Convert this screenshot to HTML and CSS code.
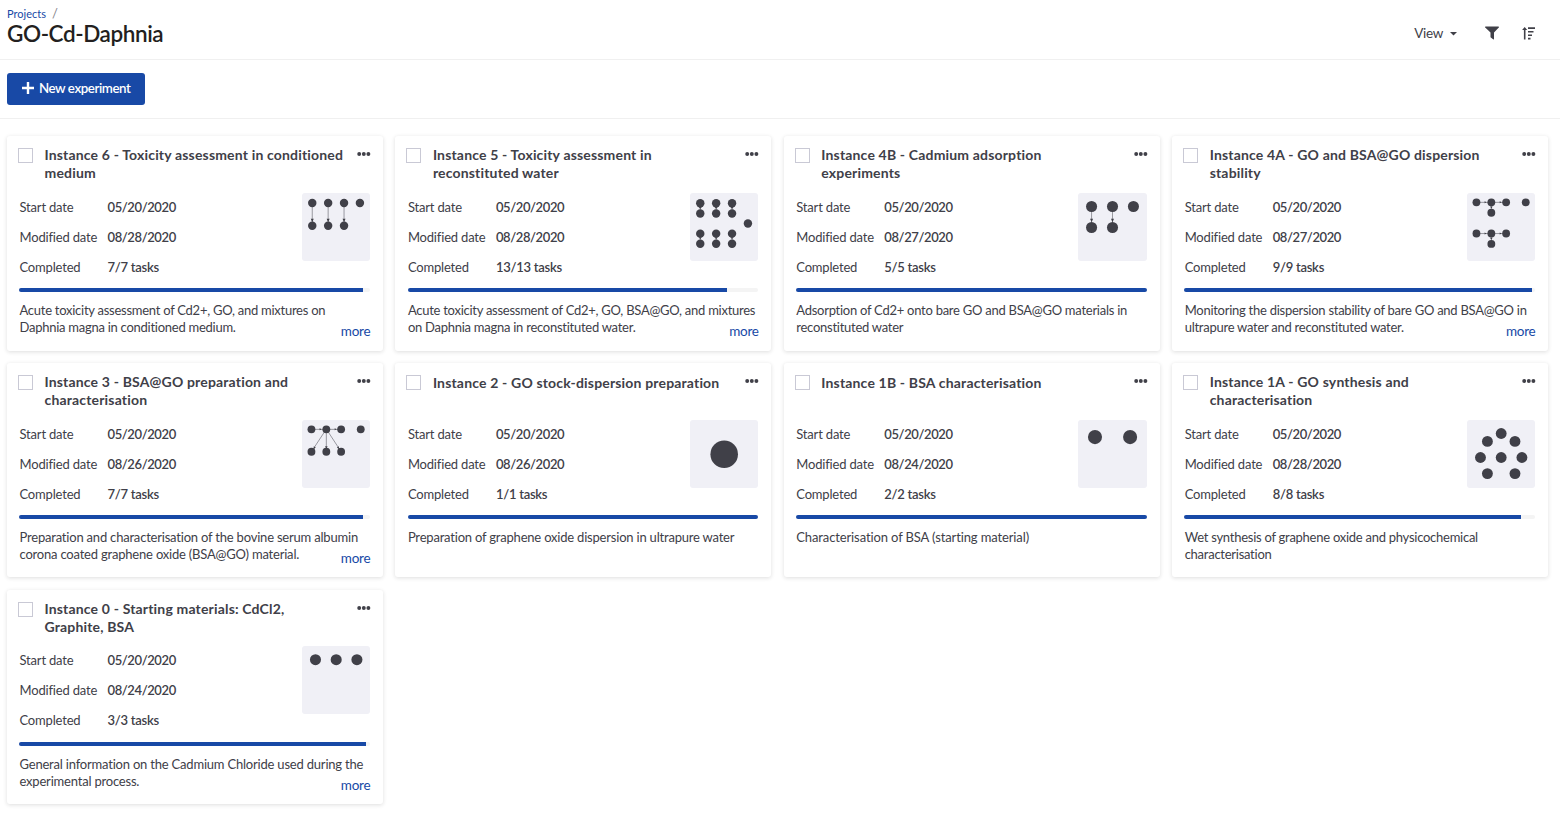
FILE: index.html
```html
<!DOCTYPE html>
<html lang="en">
<head>
<meta charset="utf-8">
<title>GO-Cd-Daphnia</title>
<link rel="stylesheet" href="styles.css">
</head>
<body>
<svg class="defs" width="0" height="0">
  <symbol id="dots" viewBox="0 0 14 6"><circle cx="2.2" cy="3" r="1.95"/><circle cx="6.8" cy="3" r="1.95"/><circle cx="11.4" cy="3" r="1.95"/></symbol>
</svg>
<header class="header">
  <div class="heading">
    <nav class="crumbs"><a>Projects</a><span class="slash">/</span></nav>
    <h1>GO-Cd-Daphnia</h1>
  </div>
  <div class="tools">
    <span class="view">View</span>
    <svg class="caret" width="7" height="4" viewBox="0 0 7 4"><path d="M0 0h7L3.5 3.6z"/></svg>
    <svg class="filter" width="14" height="14" viewBox="0 0 14 14"><path d="M.6.5h12.8c.6 0 .8.7.4 1.1L9 6.4v6.5c0 .5-.5.7-.9.4l-2.300-1.700a.7.7 0 0 1-.3-.6V6.400L.2 1.600C-.2 1.200 0 .5.600.500z"/></svg>
    <svg class="sort" width="13" height="13" viewBox="0 0 13 13"><path d="M2.700 0 5.200 3H3.500v9.500H1.900V3H.1zM6 .3h7V2H6zM6 3.900h5.500v1.600H6zM6 7.400h4v1.600H6zM6 10.800h2.500v1.600H6z"/></svg>
  </div>
</header>
<div class="actions">
  <button class="new"><svg width="12" height="12" viewBox="0 0 12 12"><path d="M4.800 0h2.400v4.800H12v2.400H7.200V12H4.800V7.200H0V4.800h4.800z"/></svg><span>New experiment</span></button>
</div>
<main class="grid">
  <article class="card">
    <div class="top"><span class="check"></span><h2>Instance 6 - Toxicity assessment in conditioned<br>medium</h2><svg class="dots"><use href="#dots"/></svg></div>
    <div class="info">
      <dl><dt>Start date</dt><dd>05/20/2020</dd><dt>Modified date</dt><dd>08/28/2020</dd><dt>Completed</dt><dd>7/7 tasks</dd></dl>
      <svg class="map" viewBox="0 0 68 68"><path d="M10.200 10v22M26 10v22M41.800 10v22"/><path class="tip" d="M8.700 25.500h3L10.200 29zM24.500 25.500h3L26 29zM40.300 25.500h3L41.800 29z"/><g><circle cx="10.200" cy="10" r="4.200"/><circle cx="26" cy="10" r="4.200"/><circle cx="41.800" cy="10" r="4.200"/><circle cx="57.600" cy="10" r="4.200"/><circle cx="10.200" cy="32.500" r="4.200"/><circle cx="26" cy="32.500" r="4.200"/><circle cx="41.800" cy="32.500" r="4.200"/></g></svg>
    </div>
    <div class="bar"><i style="width:98%"></i></div>
    <div class="foot"><p>Acute toxicity assessment of Cd2+, GO, and mixtures on<br>Daphnia magna in conditioned medium.</p><a>more</a></div>
  </article>
  <article class="card">
    <div class="top"><span class="check"></span><h2>Instance 5 - Toxicity assessment in<br>reconstituted water</h2><svg class="dots"><use href="#dots"/></svg></div>
    <div class="info">
      <dl><dt>Start date</dt><dd>05/20/2020</dd><dt>Modified date</dt><dd>08/28/2020</dd><dt>Completed</dt><dd>13/13 tasks</dd></dl>
      <svg class="map" viewBox="0 0 68 68"><path d="M10.200 10v10M26 10v10M41.800 10v10M10.200 40v10M26 40v10M41.800 40v10"/><path class="tip" d="M8.700 14h3l-1.500 2zM24.500 14h3l-1.500 2zM40.300 14h3l-1.500 2zM8.700 44h3l-1.500 2zM24.500 44h3l-1.500 2zM40.300 44h3l-1.500 2z"/><g><circle cx="10.200" cy="10.200" r="4.200"/><circle cx="26" cy="10.200" r="4.200"/><circle cx="41.800" cy="10.200" r="4.200"/><circle cx="10.200" cy="20.300" r="4.200"/><circle cx="26" cy="20.300" r="4.200"/><circle cx="41.800" cy="20.300" r="4.200"/><circle cx="10.200" cy="40.400" r="4.200"/><circle cx="26" cy="40.400" r="4.200"/><circle cx="41.800" cy="40.400" r="4.200"/><circle cx="10.200" cy="50.500" r="4.200"/><circle cx="26" cy="50.500" r="4.200"/><circle cx="41.800" cy="50.500" r="4.200"/><circle cx="57.600" cy="30.300" r="4.200"/></g></svg>
    </div>
    <div class="bar"><i style="width:91%"></i></div>
    <div class="foot"><p>Acute toxicity assessment of Cd2+, GO, BSA@GO, and mixtures<br>on Daphnia magna in reconstituted water.</p><a>more</a></div>
  </article>
  <article class="card">
    <div class="top"><span class="check"></span><h2>Instance 4B - Cadmium adsorption<br>experiments</h2><svg class="dots"><use href="#dots"/></svg></div>
    <div class="info">
      <dl><dt>Start date</dt><dd>05/20/2020</dd><dt>Modified date</dt><dd>08/27/2020</dd><dt>Completed</dt><dd>5/5 tasks</dd></dl>
      <svg class="map" viewBox="0 0 68 68"><path d="M13.500 13v21M34.300 13v21"/><path class="tip" d="M12 25.500h3l-1.500 3.500zM32.800 25.500h3l-1.500 3.500z"/><g><circle cx="13.500" cy="13.400" r="5.500"/><circle cx="34.300" cy="13.400" r="5.500"/><circle cx="55.100" cy="13.400" r="5.500"/><circle cx="13.500" cy="34.300" r="5.500"/><circle cx="34.300" cy="34.300" r="5.500"/></g></svg>
    </div>
    <div class="bar"><i style="width:100%"></i></div>
    <div class="foot"><p>Adsorption of Cd2+ onto bare GO and BSA@GO materials in<br>reconstituted water</p></div>
  </article>
  <article class="card">
    <div class="top"><span class="check"></span><h2>Instance 4A - GO and BSA@GO dispersion<br>stability</h2><svg class="dots"><use href="#dots"/></svg></div>
    <div class="info">
      <dl><dt>Start date</dt><dd>05/20/2020</dd><dt>Modified date</dt><dd>08/27/2020</dd><dt>Completed</dt><dd>9/9 tasks</dd></dl>
      <svg class="map" viewBox="0 0 68 68"><path d="M9 9.300h30M24.200 9v10M9 40.300h30M24.200 40v10"/><path class="tip" d="M17.500 8.300v2l2-1zM32.500 8.300v2l2-1zM22.900 13.500h2.600l-1.300 2zM17.500 39.300v2l2-1zM32.500 39.300v2l2-1zM22.900 44.500h2.600l-1.300 2z"/><g><circle cx="9.400" cy="9.300" r="3.900"/><circle cx="24.200" cy="9.300" r="3.900"/><circle cx="38.900" cy="9.300" r="3.900"/><circle cx="58.400" cy="9.300" r="3.900"/><circle cx="24.200" cy="19.600" r="3.900"/><circle cx="9.400" cy="40.300" r="3.900"/><circle cx="24.200" cy="40.300" r="3.900"/><circle cx="38.900" cy="40.300" r="3.900"/><circle cx="24.200" cy="50.600" r="3.900"/></g></svg>
    </div>
    <div class="bar"><i style="width:99%"></i></div>
    <div class="foot"><p>Monitoring the dispersion stability of bare GO and BSA@GO in<br>ultrapure water and reconstituted water.</p><a>more</a></div>
  </article>
  <article class="card">
    <div class="top"><span class="check"></span><h2>Instance 3 - BSA@GO preparation and<br>characterisation</h2><svg class="dots"><use href="#dots"/></svg></div>
    <div class="info">
      <dl><dt>Start date</dt><dd>05/20/2020</dd><dt>Modified date</dt><dd>08/26/2020</dd><dt>Completed</dt><dd>7/7 tasks</dd></dl>
      <svg class="map" viewBox="0 0 68 68"><path d="M9 9.300h30M24.200 9v22M24.200 9 9.400 31.500M24.200 9l14.700 22.500"/><path class="tip" d="M17.500 8.300v2l2-1zM32.500 8.300v2l2-1zM22.900 26h2.600l-1.300 2.500zM11.700 26l2 1.300-2 1.700zM36.700 26l-2 1.300 2 1.700z"/><g><circle cx="9.400" cy="9.300" r="3.900"/><circle cx="24.200" cy="9.300" r="3.900"/><circle cx="38.900" cy="9.300" r="3.900"/><circle cx="58.400" cy="9.300" r="3.900"/><circle cx="9.400" cy="31.600" r="3.900"/><circle cx="24.200" cy="31.600" r="3.900"/><circle cx="38.900" cy="31.600" r="3.900"/></g></svg>
    </div>
    <div class="bar"><i style="width:98%"></i></div>
    <div class="foot"><p class="loose">Preparation and characterisation of the bovine serum albumin<br>corona coated graphene oxide (BSA@GO) material.</p><a>more</a></div>
  </article>
  <article class="card">
    <div class="top"><span class="check"></span><h2 class="single">Instance 2 - GO stock-dispersion preparation</h2><svg class="dots"><use href="#dots"/></svg></div>
    <div class="info">
      <dl><dt>Start date</dt><dd>05/20/2020</dd><dt>Modified date</dt><dd>08/26/2020</dd><dt>Completed</dt><dd>1/1 tasks</dd></dl>
      <svg class="map" viewBox="0 0 68 68"><g><circle cx="34" cy="34" r="13.700"/></g></svg>
    </div>
    <div class="bar"><i style="width:100%"></i></div>
    <div class="foot"><p class="loose">Preparation of graphene oxide dispersion in ultrapure water</p></div>
  </article>
  <article class="card">
    <div class="top"><span class="check"></span><h2 class="single">Instance 1B - BSA characterisation</h2><svg class="dots"><use href="#dots"/></svg></div>
    <div class="info">
      <dl><dt>Start date</dt><dd>05/20/2020</dd><dt>Modified date</dt><dd>08/24/2020</dd><dt>Completed</dt><dd>2/2 tasks</dd></dl>
      <svg class="map" viewBox="0 0 68 68"><g><circle cx="16.900" cy="17" r="7"/><circle cx="51.800" cy="17" r="7"/></g></svg>
    </div>
    <div class="bar"><i style="width:100%"></i></div>
    <div class="foot"><p class="looser">Characterisation of BSA (starting material)</p></div>
  </article>
  <article class="card">
    <div class="top"><span class="check"></span><h2>Instance 1A - GO synthesis and<br>characterisation</h2><svg class="dots"><use href="#dots"/></svg></div>
    <div class="info">
      <dl><dt>Start date</dt><dd>05/20/2020</dd><dt>Modified date</dt><dd>08/28/2020</dd><dt>Completed</dt><dd>8/8 tasks</dd></dl>
      <svg class="map" viewBox="0 0 68 68"><g><circle cx="34" cy="13.400" r="5.400"/><circle cx="20.300" cy="21.300" r="5.400"/><circle cx="47.700" cy="21.300" r="5.400"/><circle cx="13.400" cy="37.300" r="5.400"/><circle cx="34" cy="37.300" r="5.400"/><circle cx="54.600" cy="37.300" r="5.400"/><circle cx="20.300" cy="53.300" r="5.400"/><circle cx="47.700" cy="53.300" r="5.400"/></g></svg>
    </div>
    <div class="bar"><i style="width:96%"></i></div>
    <div class="foot"><p>Wet synthesis of graphene oxide and physicochemical<br>characterisation</p></div>
  </article>
  <article class="card last">
    <div class="top"><span class="check"></span><h2>Instance 0 - Starting materials: CdCl2,<br>Graphite, BSA</h2><svg class="dots"><use href="#dots"/></svg></div>
    <div class="info">
      <dl><dt>Start date</dt><dd>05/20/2020</dd><dt>Modified date</dt><dd>08/24/2020</dd><dt>Completed</dt><dd>3/3 tasks</dd></dl>
      <svg class="map" viewBox="0 0 68 68"><g><circle cx="13.400" cy="13.600" r="5.500"/><circle cx="34" cy="13.600" r="5.500"/><circle cx="54.600" cy="13.600" r="5.500"/></g></svg>
    </div>
    <div class="bar"><i style="width:99%"></i></div>
    <div class="foot"><p class="loose">General information on the Cadmium Chloride used during the<br>experimental process.</p><a>more</a></div>
  </article>
</main>
</body>
</html>
```
FILE: styles.css
```css
* { box-sizing: border-box; }
body { margin: 0; background: #fff; color: #404048; font-family: Lato, sans-serif; font-size: 13px; height: 816px; overflow: hidden; }
.defs { display: block; }
h1, h2, p, dl, dd { margin: 0; }
a { color: #1849a6; }
.header { height: 60px; border-bottom: 1px solid #f0f0f0; display: flex; justify-content: space-between; padding: 6px 25px 0 7px; }
.crumbs { font-size: 11px; line-height: 16px; display: flex; gap: 6px; }
.slash { color: #85858c; font-size: 13px; line-height: 14px; }
h1 { font-size: 22.500px; line-height: 24px; font-weight: 600; letter-spacing: -.42px; color: #231f20; white-space: nowrap; }
.tools { display: flex; align-items: center; height: 54px; }
.view { font-size: 13.500px; letter-spacing: -.3px; }
.tools svg, .dots { fill: #404048; flex: none; }
.caret { margin: 2px 28px 0 7px; }
.filter { margin-right: 23px; }
.actions { height: 59px; border-bottom: 1px solid #f0f0f0; padding: 13px 7px; }
.new { display: flex; align-items: center; gap: 5px; width: 138px; height: 32px; padding: 0 0 2px 15px; border: 0; border-radius: 3px; background: #1849a6; color: #fff; font: 600 13.300px Lato, sans-serif; letter-spacing: -.43px; white-space: nowrap; }
.new svg { fill: #fff; }
.grid { display: grid; grid-template-columns: repeat(4, 376px); grid-auto-rows: 214.600px; gap: 12.250px 12.400px; padding: 17px 0 0 7px; }
.card { background: #fff; border-radius: 3px; box-shadow: 0 1px 4px rgba(35, 31, 32, .15); padding: 10px 13px 0 12.500px; display: flex; flex-direction: column; min-width: 0; }
.top { display: flex; height: 46px; flex: none; }
.check { width: 15px; height: 15px; border: 1px solid #c9c9d5; margin: 2px 11.500px 0 -1.500px; flex: none; }
h2 { flex: 1; font-size: 14px; line-height: 18px; font-weight: 700; letter-spacing: .17px; white-space: nowrap; }
.single { padding-top: 1px; }
.dots { width: 14px; height: 6px; margin: 5px -1px 0 0; }
.info { display: flex; justify-content: space-between; height: 96px; flex: none; }
.last .info { height: 97px; margin-top: -1px; }
dl { display: grid; grid-template-columns: 88px auto; grid-auto-rows: 30px; line-height: 30px; font-size: 13px; letter-spacing: -.18px; white-space: nowrap; }
dd { font-weight: 600; letter-spacing: -.4px; }
dd:last-child { letter-spacing: -.26px; }
.map { width: 68.400px; height: 68.400px; margin-top: 1px; background: #f0f0f6; border-radius: 3px; }
.map path { stroke: #72727a; stroke-width: .7; fill: none; }
.map .tip { fill: #404048; stroke: none; }
.map g { fill: #404048; }
.bar { height: 4px; flex: none; margin-left: -.4px; border-radius: 2px; background: #f4f4f4; overflow: hidden; }
.bar i { display: block; height: 4px; background: #1849a6; }
.foot { position: relative; padding-top: 10px; line-height: 17px; font-size: 13px; letter-spacing: -.26px; white-space: nowrap; }
.loose { letter-spacing: -.2px; }
.looser { letter-spacing: -.12px; }
.foot a { position: absolute; right: -.3px; bottom: -4px; font-size: 13.500px; }
```
